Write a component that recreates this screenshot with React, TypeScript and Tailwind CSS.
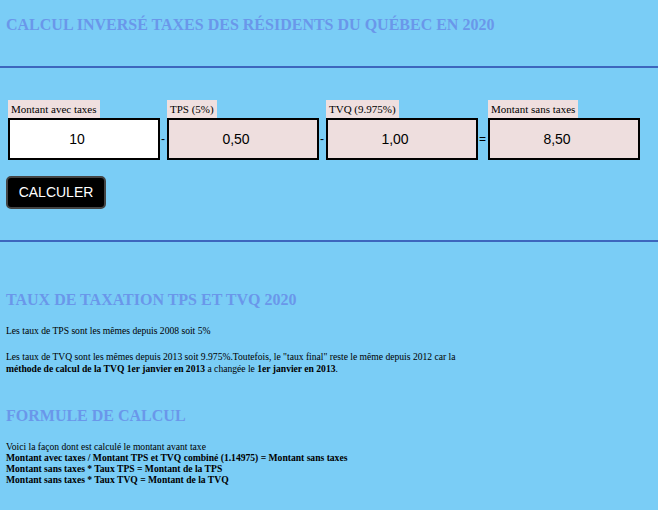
import React from "react";

function Field({ label, value, white }: { label: string; value: string; white?: boolean }) {
  return (
    <div className="flex flex-col items-start">
      <span className="bg-[#efdfdf] px-[3px] pt-[2px] h-[18px] text-[11px] leading-[15px] text-black">{label}</span>
      <div
        className={
          "w-[152px] h-[42px] border-2 border-black flex items-center justify-center pr-[14px] font-['Liberation_Sans'] text-[14px] text-black " +
          (white ? "bg-white" : "bg-[#eedede]")
        }
      >
        {value}
      </div>
    </div>
  );
}

function Sep({ c, w }: { c: string; w: string }) {
  return (
    <span className={w + " mt-[18px] h-[42px] flex items-center justify-start pl-[1px] font-['Liberation_Sans'] text-[12px] text-black"}>
      {c}
    </span>
  );
}

export default function App() {
  return (
    <div className="min-h-[510px] w-full bg-[#7acdf6] font-['Liberation_Serif',serif] text-black overflow-hidden">
      <div className="px-[6px] pt-[14px]">
        <h1 className="text-[16px] leading-[22px] font-bold text-[#6a97ea]">CALCUL INVERSÉ TAXES DES RÉSIDENTS DU QUÉBEC EN 2020</h1>
      </div>
      <div className="mt-[30px] h-[2px] bg-[#3d66bd]" />
      <div className="pl-[8px] pt-[32px] flex items-start">
        <Field label="Montant avec taxes" value="10" white />
        <Sep c="-" w="w-[7px]" />
        <Field label="TPS (5%)" value="0,50" />
        <Sep c="-" w="w-[7px]" />
        <Field label="TVQ (9.975%)" value="1,00" />
        <Sep c="=" w="w-[10px]" />
        <Field label="Montant sans taxes" value="8,50" />
      </div>
      <div className="pl-[6px] pt-[16px]">
        <button className="w-[100px] h-[33px] bg-black text-white border-2 border-[#444] rounded-[5px] font-['Liberation_Sans'] text-[14px]">
          CALCULER
        </button>
      </div>
      <div className="mt-[31px] h-[2px] bg-[#3d66bd]" />
      <div className="px-[6px]">
        <h2 className="mt-[48px] text-[16px] leading-[20px] font-bold text-[#6a97ea]">TAUX DE TAXATION TPS ET TVQ 2020</h2>
        <p className="mt-[15px] text-[9.6px] leading-[12px]">Les taux de TPS sont les mêmes depuis 2008 soit 5%</p>
        <p className="mt-[14px] text-[9.6px] leading-[12px]">
          Les taux de TVQ sont les mêmes depuis 2013 soit 9.975%.Toutefois, le "taux final" reste le même depuis 2012 car la
          <br />
          <b>méthode de calcul de la TVQ 1er janvier en 2013</b> a changée le <b>1er janvier en 2013</b>.
        </p>
        <h2 className="mt-[31px] text-[16px] leading-[20px] font-bold text-[#6a97ea]">FORMULE DE CALCUL</h2>
        <p className="mt-[15px] text-[9.6px] leading-[11px]">
          Voici la façon dont est calculé le montant avant taxe
          <br />
          <b>Montant avec taxes / Montant TPS et TVQ combiné (1.14975) = Montant sans taxes</b>
          <br />
          <b>Montant sans taxes * Taux TPS = Montant de la TPS</b>
          <br />
          <b>Montant sans taxes * Taux TVQ = Montant de la TVQ</b>
        </p>
      </div>
    </div>
  );
}
